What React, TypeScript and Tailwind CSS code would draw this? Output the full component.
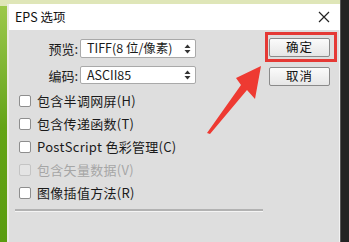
import React from "react";

const font = { fontFamily: '"Noto Sans CJK SC", "Noto Sans", sans-serif' };

function Check({ label, disabled }: { label: React.ReactNode; disabled?: boolean }) {
  return (
    <div className="flex items-center h-[23px]">
      <div
        className={
          "w-[12px] h-[12px] rounded-[2px] border " +
          (disabled ? "border-[#c4c4c4] bg-[#e4e4e4]" : "border-[#8e8e8e] bg-white")
        }
      />
      <span
        className={"ml-[6px] text-[13px] leading-none tracking-[0.3px] " + (disabled ? "text-[#a6a6a6]" : "text-[#1a1a1a]")}
      >
        {label}
      </span>
    </div>
  );
}

function Select({ text, h }: { text: string; h: string }) {
  return (
    <div
      className={
        "w-[116px] " + h + " bg-white border border-[#a9a9a9] rounded-[2px] flex items-center justify-between pl-[6px] pr-[4px]"
      }
    >
      <span className="text-[12.5px] leading-none text-[#1a1a1a]">{text}</span>
      <svg width="7" height="10" viewBox="0 0 7 10">
        <path d="M3.5 0.5 L6.5 4 L0.5 4 Z" fill="#333" />
        <path d="M3.5 9.5 L6.5 6 L0.5 6 Z" fill="#333" />
      </svg>
    </div>
  );
}

function Btn({ text }: { text: string }) {
  return (
    <div className="w-[61px] h-[19px] border border-[#8a8a8a] rounded-[2px] bg-gradient-to-b from-[#fbfbfb] to-[#e6e6e6] flex items-center justify-center text-[12.5px] tracking-[1px] text-[#111] leading-none">
      {text}
    </div>
  );
}

export default function App() {
  return (
    <div className="w-[349px] h-[242px] relative overflow-hidden flex bg-[#dfe6b8]" style={font}>
      <div className="w-[7px] h-full bg-gradient-to-b from-[#9cc84a] via-[#64a414] to-[#5a9c0e] mt-[6px]" />
      <div className="w-[333px] mt-[4px] flex flex-col border-l-[2px] border-[#ecebe3]">
        <div className="h-[26px] bg-white flex items-center justify-between pl-[6px] pr-[10px]">
          <span className="text-[12.5px] text-[#111] leading-none">EPS 选项</span>
          <svg width="12" height="12" viewBox="0 0 12 12">
            <path d="M1 1 L11 11 M11 1 L1 11" stroke="#222" strokeWidth="1.2" />
          </svg>
        </div>
        <div className="flex-1 bg-[#dedede] flex border-r-[1px] border-[#f2f2f2]">
          <div className="w-[257px] flex flex-col">
            <div className="flex items-center mt-[9px]">
              <span className="w-[71px] text-right text-[13px] leading-none text-[#1a1a1a] pr-[2px]">预览:</span>
              <Select text="TIFF(8 位/像素)" h="h-[19px]" />
            </div>
            <div className="flex items-center mt-[8px]">
              <span className="w-[71px] text-right text-[13px] leading-none text-[#1a1a1a] pr-[2px]">编码:</span>
              <Select text="ASCII85" h="h-[18px]" />
            </div>
            <div className="flex flex-col ml-[10px] mt-[5px]">
              <Check label={<>包含半调网屏(H)</>} />
              <Check label={<>包含传递函数(T)</>} />
              <Check label={<>PostScript 色彩管理(C)</>} />
              <Check label={<>包含矢量数据(V)</>} disabled />
              <Check label={<>图像插值方法(R)</>} />
            </div>
            <div className="ml-[6px] mt-[5px] w-[248px] border-t-[2px] border-[#b2b2b2] border-b-[1px] border-b-[#f4f4f4]" />
          </div>
          <div className="flex flex-col ml-[3px] mt-[8px]">
            <Btn text="确定" />
            <div className="mt-[10px]">
              <Btn text="取消" />
            </div>
          </div>
        </div>
      </div>
      <div className="flex-1 bg-[#232323] border-l-[1px] border-[#555]" />
      <div className="absolute left-[265px] top-[32px] w-[72px] h-[30px] border-[3px] border-[#e53935]" />
      <svg className="absolute left-0 top-0" width="349" height="242" viewBox="0 0 349 242">
        <path d="M261 66 L255 99 L247 90 L210 134 L207 133 L241 85 L236 78 Z" fill="#ee3a32" />
      </svg>
    </div>
  );
}
